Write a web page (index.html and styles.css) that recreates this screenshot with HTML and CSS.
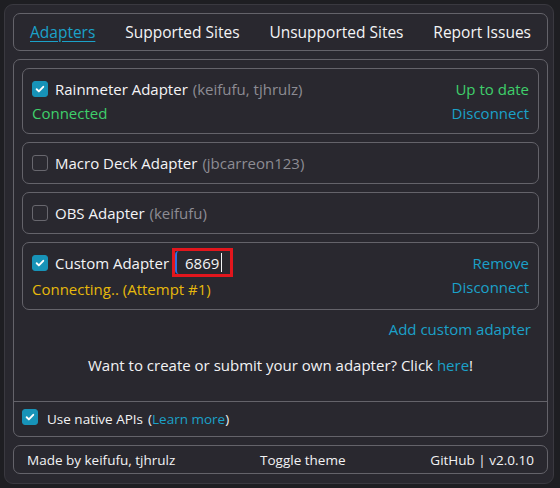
FILE: index.html
```html
<!DOCTYPE html>
<html>
<head>
<meta charset="utf-8">
<link rel="stylesheet" href="styles.css">
</head>
<body>
<div class="window">
  <nav class="box nav">
    <a class="nav-link active">Adapters</a>
    <a class="nav-link">Supported Sites</a>
    <a class="nav-link">Unsupported Sites</a>
    <a class="nav-link">Report Issues</a>
  </nav>

  <main class="box main">
    <section class="adapters">
      <div class="card">
        <div class="card-left">
          <div class="line">
            <span class="cb checked"><svg viewBox="0 0 16 16"><path d="M4.2 8.3l2.5 2.4 5-5.2" /></svg></span>
            <span class="name">Rainmeter Adapter</span>
            <span class="authors">(keifufu, tjhrulz)</span>
          </div>
          <div class="line green">Connected</div>
        </div>
        <div class="card-right">
          <div class="line green">Up to date</div>
          <div class="line link">Disconnect</div>
        </div>
      </div>

      <div class="card">
        <div class="card-left">
          <div class="line">
            <span class="cb"></span>
            <span class="name">Macro Deck Adapter</span>
            <span class="authors">(jbcarreon123)</span>
          </div>
        </div>
      </div>

      <div class="card">
        <div class="card-left">
          <div class="line">
            <span class="cb"></span>
            <span class="name">OBS Adapter</span>
            <span class="authors">(keifufu)</span>
          </div>
        </div>
      </div>

      <div class="card">
        <div class="card-left">
          <div class="line">
            <span class="cb checked"><svg viewBox="0 0 16 16"><path d="M4.2 8.3l2.5 2.4 5-5.2" /></svg></span>
            <span class="name">Custom Adapter</span>
            <span class="port-mark"><span class="port-input">6869<span class="caret"></span></span></span>
          </div>
          <div class="line yellow status2">Connecting.. (Attempt #1)</div>
        </div>
        <div class="card-right">
          <div class="line link">Remove</div>
          <div class="line link">Disconnect</div>
        </div>
      </div>

      <div class="add-row"><a class="link">Add custom adapter</a></div>
      <p class="message">Want to create or submit your own adapter? Click <a class="link">here</a>!</p>
    </section>

    <div class="native">
      <span class="cb checked"><svg viewBox="0 0 16 16"><path d="M4.2 8.3l2.5 2.4 5-5.2" /></svg></span>
      <span class="native-label">Use native APIs</span>
      <span class="native-learn">(<a class="link">Learn more</a>)</span>
    </div>
  </main>

  <footer class="box footer">
    <span>Made by keifufu, tjhrulz</span>
    <span>Toggle theme</span>
    <span>GitHub | v2.0.10</span>
  </footer>
</div>
</body>
</html>
```

FILE: styles.css
```css
* { box-sizing: border-box; }

html, body {
  margin: 0;
  padding: 0;
  background: #1e1e22;
}

body {
  font-family: "Open Sans", "Noto Sans", sans-serif;
  font-size: 15px;
  color: #f2f2f4;
  width: 560px;
  height: 488px;
  overflow: hidden;
}

.window {
  margin: 4px 0 0 4px;
  width: 550px;
  height: 480px;
  border: 1px solid #3a3940;
  border-radius: 9px;
  background: #29282f;
  padding: 8px 5px 8px 8px;
  display: flex;
  flex-direction: column;
  gap: 8px;
}

.box {
  border: 1px solid #64636a;
  border-radius: 7px;
}

.nav {
  height: 38px;
  display: flex;
  align-items: center;
  justify-content: space-between;
  padding: 0 16px 0 16px;
  font-size: 15.5px;
}

.nav-link {
  color: #f4f4f6;
  cursor: pointer;
}

.nav-link.active {
  color: #1ba1c9;
  text-decoration: underline;
  text-underline-offset: 3px;
}

.main {
  height: 378px;
  display: flex;
  flex-direction: column;
}

.adapters {
  padding: 8px 8px 24px 8px;
  display: flex;
  flex-direction: column;
  gap: 8px;
}

.card {
  border: 1px solid #64636a;
  border-radius: 7px;
  padding: 8px 9px 8px 9px;
  display: flex;
  justify-content: space-between;
}

.card-left, .card-right {
  display: flex;
  flex-direction: column;
}

.card-right {
  align-items: flex-end;
}

.line {
  height: 24px;
  line-height: 24px;
  display: flex;
  align-items: center;
  white-space: nowrap;
}

.status2 {
  margin-top: 2px;
}

.cb {
  width: 16px;
  height: 16px;
  border-radius: 3px;
  border: 1px solid #68676e;
  background: #2b2a31;
  margin-right: 7px;
  flex: none;
  display: inline-flex;
  align-items: center;
  justify-content: center;
}

.cb.checked {
  background: #1793b8;
  border-color: #1793b8;
}

.cb svg {
  width: 14px;
  height: 14px;
  fill: none;
  stroke: #ffffff;
  stroke-width: 2.2;
  stroke-linecap: round;
  stroke-linejoin: round;
}

.name {
  color: #f4f4f6;
}

.authors {
  color: #8d8c93;
  margin-left: 5px;
}

.green { color: #3fcf6b; }
.yellow { color: #e6b90c; }
.link { color: #1ba1c9; cursor: pointer; }

.port-mark {
  margin-left: 3px;
  border: 3px solid #e2161d;
  height: 29px;
  width: 61px;
  margin-top: -3px;
  margin-bottom: -2px;
  display: flex;
  align-items: stretch;
}

.port-input {
  flex: 1;
  border-left: 2px solid #2f6fe0;
  border-radius: 4px 0 0 4px;
  padding-left: 8px;
  display: flex;
  align-items: center;
  color: #f4f4f6;
}

.caret {
  display: inline-block;
  width: 1px;
  height: 19px;
  background: #f4f4f6;
  margin-left: 2px;
}

.add-row {
  margin-top: -1px;
  height: 24px;
  line-height: 24px;
  text-align: right;
  padding-right: 8px;
}

.message {
  margin: 4px 0 0 0;
  height: 24px;
  line-height: 24px;
  text-align: center;
}

.native {
  border-top: 1px solid #64636a;
  flex: 1;
  display: flex;
  align-items: center;
  padding-left: 8px;
  font-size: 13.5px;
}

.native .cb {
  margin-right: 9px;
  margin-top: -4px;
}

.native-learn {
  margin-left: 5px;
  color: #f4f4f6;
}

.footer {
  height: 29px;
  display: flex;
  align-items: center;
  justify-content: space-between;
  padding: 0 13px;
  font-size: 13.5px;
}
```
